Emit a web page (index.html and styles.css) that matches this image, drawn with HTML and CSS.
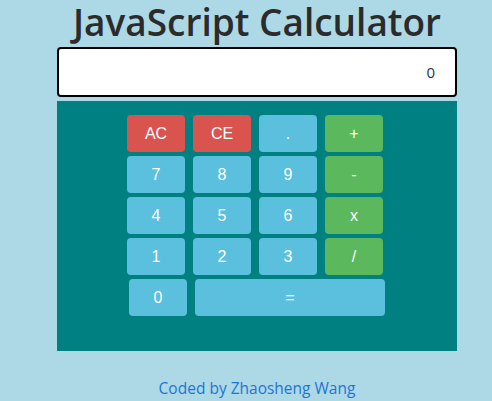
FILE: index.html
```html
<!DOCTYPE html>
<html>
<head>
<meta charset="utf-8">
<link rel="stylesheet" href="styles.css">
</head>
<body>
<div class="wrap">
  <h1 class="title">JavaScript Calculator</h1>
  <div class="display"><span class="value">0</span></div>
  <div class="panel">
    <div class="row">
      <button class="btn red">AC</button>
      <button class="btn red">CE</button>
      <button class="btn blue">.</button>
      <button class="btn green">+</button>
    </div>
    <div class="row">
      <button class="btn blue">7</button>
      <button class="btn blue">8</button>
      <button class="btn blue">9</button>
      <button class="btn green">-</button>
    </div>
    <div class="row">
      <button class="btn blue">4</button>
      <button class="btn blue">5</button>
      <button class="btn blue">6</button>
      <button class="btn green">x</button>
    </div>
    <div class="row">
      <button class="btn blue">1</button>
      <button class="btn blue">2</button>
      <button class="btn blue">3</button>
      <button class="btn green">/</button>
    </div>
    <div class="row last">
      <button class="btn blue">0</button>
      <button class="btn blue wide">=</button>
    </div>
  </div>
  <p class="footer"><a href="#">Coded by Zhaosheng Wang</a></p>
</div>
</body>
</html>
```
FILE: styles.css
```css
html, body {
  margin: 0;
  padding: 0;
  background: #add8e6;
}
body {
  padding-left: 22px;
  font-family: "Open Sans", "Noto Sans", sans-serif;
}
.wrap {
  width: 400px;
  margin: 0 auto;
}
.title {
  margin: 0;
  height: 47px;
  font-weight: 600;
  font-size: 37px;
  line-height: 44px;
  color: #2b2b2b;
  text-align: center;
  white-space: nowrap;
}
.display {
  box-sizing: border-box;
  height: 50px;
  border: 2px solid #000;
  border-radius: 4px;
  background: #fff;
  display: flex;
  align-items: center;
  justify-content: flex-end;
  padding-right: 20px;
}
.value {
  font-size: 15px;
  color: #1e3350;
}
.panel {
  margin-top: 4px;
  height: 250px;
  box-sizing: border-box;
  background: #008080;
  padding: 14px 0 0 70px;
  display: flex;
  flex-direction: column;
  gap: 4px;
}
.row {
  display: flex;
  gap: 8px;
}
.row.last {
  margin-left: 2px;
}
.btn {
  width: 58px;
  height: 37px;
  border: none;
  border-radius: 4px;
  color: #fff;
  font-family: "Liberation Sans", Arial, sans-serif;
  font-size: 16px;
  padding: 0;
}
.btn.wide {
  width: 190px;
}
.red { background: #d9534f; }
.blue { background: #5bc0de; }
.green { background: #5cb85c; }
.footer {
  margin: 26px 0 0;
  text-align: center;
  font-size: 15.5px;
}
.footer a {
  color: #1f74d6;
  text-decoration: none;
}
```
